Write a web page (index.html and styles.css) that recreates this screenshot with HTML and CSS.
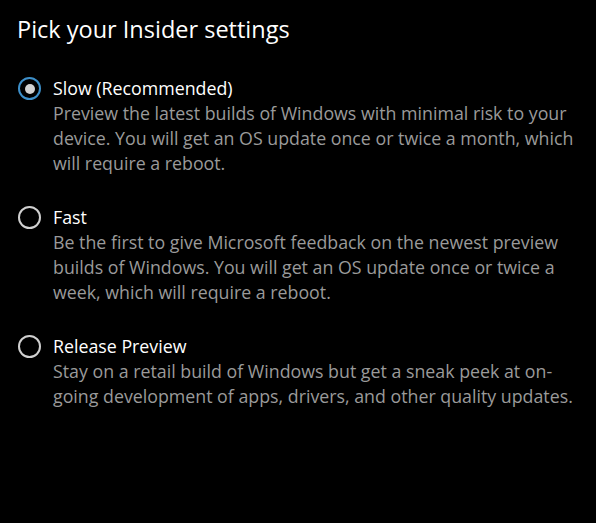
FILE: index.html
```html
<!DOCTYPE html>
<html lang="en">
<head>
<meta charset="utf-8">
<title>Pick your Insider settings</title>
<link rel="stylesheet" href="styles.css">
</head>
<body>
<main class="page">
  <h1 class="title">Pick your Insider settings</h1>
  <div class="options" role="radiogroup">
    <div class="option">
      <span class="radio radio-checked"><span class="dot"></span></span>
      <div class="text">
        <div class="label">Slow (Recommended)</div>
        <div class="desc">Preview the latest builds of Windows with minimal risk to your device. You will get an OS update once or twice a month, which will require a reboot.</div>
      </div>
    </div>
    <div class="option">
      <span class="radio"></span>
      <div class="text">
        <div class="label">Fast</div>
        <div class="desc">Be the first to give Microsoft feedback on the newest preview builds of Windows. You will get an OS update once or twice a week, which will require a reboot.</div>
      </div>
    </div>
    <div class="option">
      <span class="radio"></span>
      <div class="text">
        <div class="label">Release Preview</div>
        <div class="desc">Stay on a retail build of Windows but get a sneak peek at on-going development of apps, drivers, and other quality updates.</div>
      </div>
    </div>
  </div>
</main>
</body>
</html>
```

FILE: styles.css
```css
html, body {
  margin: 0;
  background: #000;
}
body {
  font-family: "Open Sans", "Noto Sans", sans-serif;
  color: #fff;
}
.page {
  padding: 12px 17px 0 17px;
}
.title {
  margin: 0;
  font-size: 23.5px;
  font-weight: 400;
  line-height: 34px;
  color: #fff;
}
.options {
  margin-top: 30px;
  display: flex;
  flex-direction: column;
  gap: 29px;
}
.option {
  display: flex;
  align-items: flex-start;
  gap: 12px;
}
.radio {
  flex: none;
  box-sizing: border-box;
  width: 23px;
  height: 23px;
  margin-top: 1px;
  margin-left: 1px;
  border: 2px solid #d0d0d0;
  border-radius: 50%;
  display: flex;
  align-items: center;
  justify-content: center;
}
.radio-checked {
  border-color: #3d8fc9;
}
.dot {
  width: 10px;
  height: 10px;
  border-radius: 50%;
  background: #d2d2d2;
}
.text {
  width: 530px;
}
.label {
  font-size: 17.8px;
  line-height: 25px;
  color: #fff;
}
.desc {
  font-size: 17.8px;
  line-height: 25px;
  color: #9a9a9a;
}
```
